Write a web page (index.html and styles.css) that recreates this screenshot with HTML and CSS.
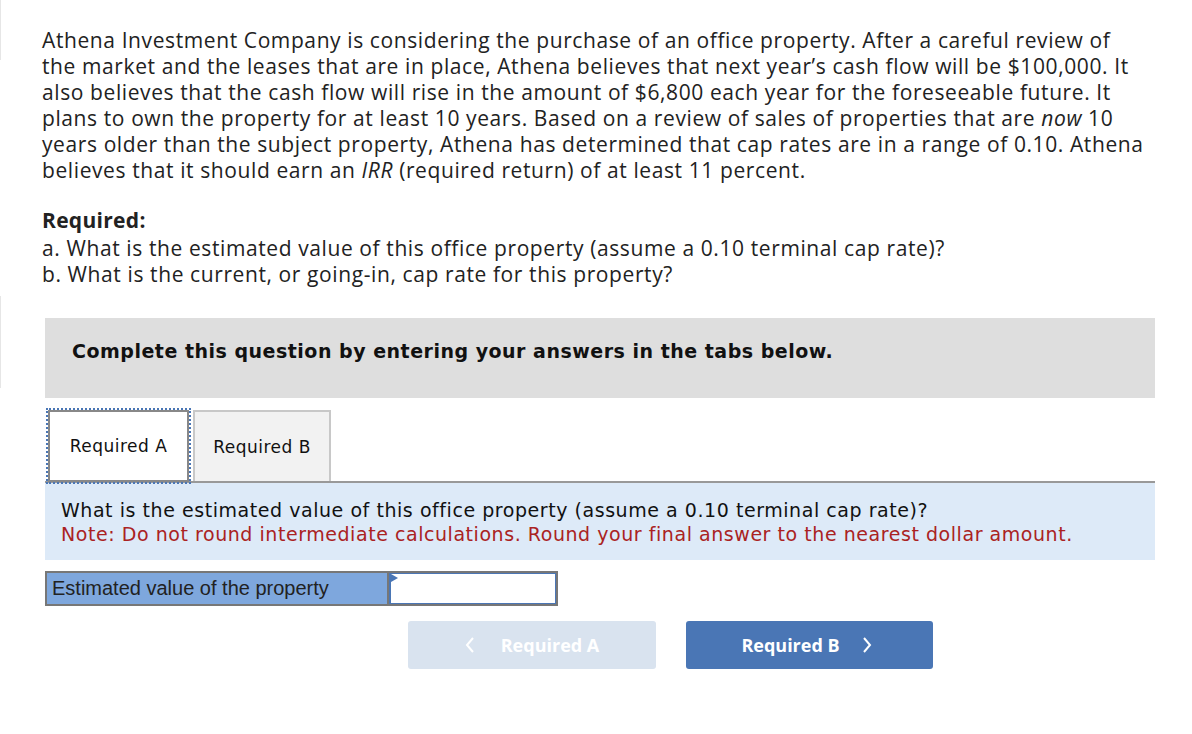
FILE: index.html
```html
<!DOCTYPE html>
<html>
<head>
<meta charset="utf-8">
<link rel="stylesheet" href="styles.css">
</head>
<body>
<div class="edge edge-top"></div>
<div class="edge edge-mid"></div>
<div class="page">
  <p class="intro">Athena Investment Company is considering the purchase of an office property. After a careful review of<br>
  the market and the leases that are in place, Athena believes that next year’s cash flow will be $100,000. It<br>
  also believes that the cash flow will rise in the amount of $6,800 each year for the foreseeable future. It<br>
  plans to own the property for at least 10 years. Based on a review of sales of properties that are <i>now</i> 10<br>
  years older than the subject property, Athena has determined that cap rates are in a range of 0.10. Athena<br>
  believes that it should earn an <i>IRR</i> (required return) of at least 11 percent.</p>
  <div class="required">
    <div class="req-title">Required:</div>
    <div>a. What is the estimated value of this office property (assume a 0.10 terminal cap rate)?</div>
    <div>b. What is the current, or going-in, cap rate for this property?</div>
  </div>
  <div class="panel">
    <div class="banner">Complete this question by entering your answers in the tabs below.</div>
    <div class="tabs">
      <div class="tab tab-active">Required A</div>
      <div class="tab tab-other">Required B</div>
    </div>
    <div class="question">
      <div>What is the estimated value of this office property (assume a 0.10 terminal cap rate)?</div>
      <div class="note">Note: Do not round intermediate calculations. Round your final answer to the nearest dollar amount.</div>
    </div>
    <div class="answer">
      <div class="answer-label">Estimated value of the property</div>
      <div class="answer-input"><span class="flag"></span></div>
    </div>
    <div class="nav">
      <div class="btn btn-prev">
        <svg class="chev chev-left" width="10" height="16" viewBox="0 0 10 16"><polyline points="8,1 2,8 8,15" fill="none" stroke="#fff" stroke-width="2"/></svg>
        <span class="lbl">Required A</span>
      </div>
      <div class="btn btn-next">
        <span class="lbl">Required B</span>
        <svg class="chev chev-right" width="10" height="16" viewBox="0 0 10 16"><polyline points="2,1 8,8 2,15" fill="none" stroke="#fff" stroke-width="2"/></svg>
      </div>
    </div>
  </div>
</div>
</body>
</html>
```
FILE: styles.css
```css
html, body { margin: 0; padding: 0; background: #fff; }
body { position: relative; width: 1192px; height: 734px; overflow: hidden; }
.edge { position: absolute; left: 0; width: 1px; background: #e6e6e6; }
.edge-top { top: 0; height: 60px; }
.edge-mid { top: 296px; height: 92px; }
.page { padding: 27px 0 0 42px; width: 1130px; }
.intro {
  margin: 0;
  font-family: "Open Sans", sans-serif;
  font-size: 21px;
  letter-spacing: 0.6px;
  line-height: 26px;
  color: #222;
}
.required {
  margin-top: 24px;
  font-family: "Open Sans", sans-serif;
  font-size: 21px;
  letter-spacing: 0.6px;
  line-height: 26px;
  color: #222;
}
.req-title { font-weight: bold; letter-spacing: 0.3px; margin-bottom: 2px; }
.panel { margin-left: 3px; width: 1110px; margin-top: 31px; }
.banner {
  background: #dedede;
  height: 80px;
  box-sizing: border-box;
  padding: 22px 0 0 27px;
  font-family: "DejaVu Sans", Verdana, sans-serif;
  font-weight: bold;
  font-size: 19px;
  letter-spacing: 0.5px;
  color: #111;
}
.tabs {
  display: flex;
  align-items: flex-end;
  margin-top: 12px;
  height: 71px;
  border-bottom: 2px solid #999;
}
.tab {
  box-sizing: border-box;
  height: 71px;
  display: flex; align-items: center; justify-content: center;
  font-family: "DejaVu Sans", Verdana, sans-serif;
  font-size: 17px;
  letter-spacing: 0.5px;
  color: #111;
}
.tab-active {
  width: 141px;
  margin-left: 3px;
  height: 72px;
  margin-bottom: -1px;
  background: #fff;
  border: 2px solid #888;
  outline: 2px dotted #4a76b5;
  outline-offset: 0;
}
.tab-other {
  width: 138px;
  margin-left: 4px;
  background: #f2f2f2;
  border: 2px solid #c8c8c8;
  border-bottom: none;
}
.question {
  background: #ddeaf8;
  height: 77px;
  box-sizing: border-box;
  padding: 15px 0 0 16px;
  font-family: "DejaVu Sans", Verdana, sans-serif;
  font-size: 19px;
  letter-spacing: 0.55px;
  line-height: 24px;
  color: #111;
}
.note { color: #aa2222; }
.answer {
  display: flex;
  margin-top: 11px;
  width: 513px;
  height: 35px;
  box-sizing: border-box;
  border: 2px solid #777;
}
.answer-label {
  width: 342px;
  background: #7ea7dd;
  font-family: "Liberation Sans", Arial, sans-serif;
  font-size: 20px;
  line-height: 31px;
  color: #222;
  padding-left: 5px;
  box-sizing: border-box;
  border-right: 2px solid #777;
}
.answer-input {
  flex: 1;
  position: relative;
  background: #fff;
  border: 2px solid #4a76b5;
  border-width: 1px 1px 1px 2px;
}
.flag {
  position: absolute; left: 0; top: 0;
  width: 0; height: 0;
  border-top: 4px solid transparent;
  border-bottom: 4px solid transparent;
  border-left: 7px solid #4a76b5;
}
.nav { display: flex; margin-top: 15px; margin-left: 363px; gap: 30px; }
.btn {
  width: 248px; height: 48px;
  border-radius: 3px;
  display: flex; align-items: center; justify-content: center;
  font-family: "Open Sans", sans-serif;
  font-weight: bold;
  font-size: 18px;
  color: #fff;
}
.btn-prev { background: #d9e3ef; }
.btn-prev .chev { margin-right: 26px; }
.btn-next { background: #4a76b5; width: 247px; padding-right: 6px; box-sizing: border-box; }
.btn-next .chev { margin-left: 22px; }
```
